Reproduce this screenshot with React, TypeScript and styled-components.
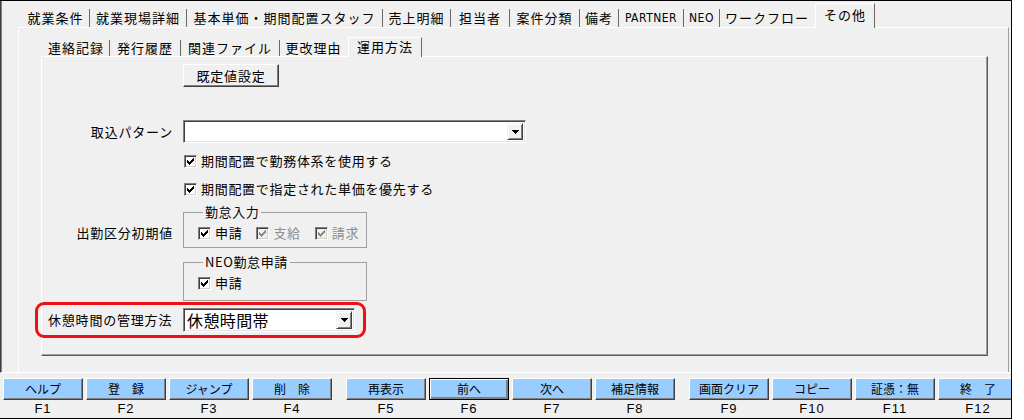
import React from 'react';
import styled, { createGlobalStyle, css } from 'styled-components';

const GlobalStyle = createGlobalStyle`
  html, body { margin: 0; padding: 0; background: #ffffff; }
  body {
    font-family: "Noto Sans CJK JP", "Noto Sans", sans-serif;
    font-size: 13px;
    color: #000;
  }
  svg { display: block; }
`;

const JP = `"Noto Sans CJK JP", "Noto Sans", sans-serif`;

const Window = styled.div`
  width: 1012px;
  height: 419px;
  box-sizing: border-box;
  border-top: 1px solid #000;
  border-right: 1px solid #000;
  border-bottom: 1px solid #000;
  background: #f0f0f0;
  display: flex;
  flex-direction: column;
  overflow: hidden;
`;

const TopArea = styled.div`
  height: 372px;
  flex: none;
  box-sizing: border-box;
  border-left: 1px solid #404040;
  box-shadow: inset 1px 0 0 #808080;
  border-bottom: 1px solid #ffffff;
  padding: 0 2px 0 17px;
  display: flex;
  flex-direction: column;
`;

const TabStrip = styled.div<{ $h: number; $ml: number }>`
  height: ${p => p.$h}px;
  flex: none;
  display: flex;
  align-items: flex-end;
  padding-left: ${p => p.$ml}px;
`;

const Tab = styled.div<{ $w: number; $h: number; $ah: number; $active?: boolean; $hideSep?: boolean; $narrow?: boolean }>`
  width: ${p => p.$w}px;
  height: ${p => (p.$active ? p.$ah : p.$h)}px;
  flex: none;
  box-sizing: border-box;
  display: flex;
  align-items: center;
  justify-content: center;
  white-space: nowrap;
  font-family: ${p => (p.$narrow ? `"DejaVu Sans Condensed", ${JP}` : JP)};
  font-size: ${p => (p.$narrow ? 12 : 13)}px;
  line-height: 14px;
  letter-spacing: ${p => (p.$narrow ? 0.5 : 1)}px;
  background: #f0f0f0;
  border-right: 1px solid ${p => (p.$hideSep ? 'transparent' : '#696969')};
  ${p =>
    p.$active &&
    css`
      border-top: 1px solid #ffffff;
      border-left: 1px solid #ffffff;
      margin-bottom: -1px;
      padding-bottom: 2px;
      position: relative;
      z-index: 1;
    `}
`;

const OuterPanel = styled.div`
  flex: 1;
  box-sizing: border-box;
  border-top: 1px solid #ffffff;
  border-left: 1px solid #ffffff;
  border-right: 1px solid #a0a0a0;
  padding: 7px 20px 0 22px;
  display: flex;
  flex-direction: column;
`;

const InnerPanel = styled.div`
  height: 300px;
  flex: none;
  box-sizing: border-box;
  border-top: 1px solid #ffffff;
  border-left: 1px solid #ffffff;
  border-right: 1px solid #5a5a5a;
  border-bottom: 1px solid #5a5a5a;
  box-shadow: inset -1px -1px 0 #a0a0a0;
  display: flex;
  flex-direction: column;
`;

const FormRow = styled.div<{ $mt: number }>`
  display: grid;
  grid-template-columns: 131px auto;
  column-gap: 10px;
  align-items: center;
  justify-items: start;
  margin-top: ${p => p.$mt}px;
`;

const FieldLabel = styled.div<{ $end?: boolean }>`
  justify-self: end;
  white-space: nowrap;
  font-size: 13px;
  line-height: 16px;
  letter-spacing: 0.8px;
  ${p =>
    p.$end &&
    css`
      align-self: end;
      padding-bottom: 7px;
    `}
`;

const PushButton = styled.div`
  width: 96px;
  height: 23px;
  box-sizing: border-box;
  display: flex;
  align-items: center;
  justify-content: center;
  background: #f0f0f0;
  border: 1px solid;
  border-color: #ffffff #404040 #404040 #ffffff;
  box-shadow: inset -1px -1px 0 #808080;
  font-size: 13px;
  letter-spacing: 0.8px;
  line-height: 14px;
`;

const Combo = styled.div<{ $w: number; $h: number }>`
  width: ${p => p.$w}px;
  height: ${p => p.$h}px;
  box-sizing: border-box;
  display: flex;
  align-items: stretch;
  background: #ffffff;
  border: 1px solid;
  border-color: #808080 #ffffff #ffffff #808080;
  box-shadow: inset 1px 1px 0 #404040, inset -1px -1px 0 #e3e3e3;
  padding: 2px;
`;

const ComboText = styled.div<{ $size: number }>`
  flex: 1;
  display: flex;
  align-items: center;
  padding-left: 1px;
  font-size: ${p => p.$size}px;
  line-height: ${p => p.$size + 2}px;
  letter-spacing: 0.4px;
  white-space: nowrap;
`;

const ComboArrow = styled.div`
  width: 16px;
  flex: none;
  box-sizing: border-box;
  display: flex;
  align-items: center;
  justify-content: center;
  background: #f0f0f0;
  border: 1px solid;
  border-color: #f0f0f0 #404040 #404040 #f0f0f0;
  box-shadow: inset 1px 1px 0 #ffffff, inset -1px -1px 0 #808080;
`;

const CheckRow = styled.div<{ $gap?: number }>`
  display: flex;
  align-items: center;
  gap: ${p => p.$gap ?? 0}px;
  height: 18px;
`;

const CheckItem = styled.div<{ $disabled?: boolean; $ml?: number }>`
  display: inline-flex;
  align-items: center;
  gap: 4px;
  margin-left: ${p => p.$ml ?? 0}px;
  color: ${p => (p.$disabled ? '#8d8d8d' : '#000')};
  font-size: 13px;
  line-height: 16px;
  letter-spacing: 0.7px;
  white-space: nowrap;
`;

const Box = styled.span<{ $disabled?: boolean }>`
  width: 13px;
  height: 13px;
  flex: none;
  box-sizing: border-box;
  display: inline-flex;
  align-items: center;
  justify-content: center;
  border: 1px solid;
  border-color: #808080 #ffffff #ffffff #808080;
  box-shadow: inset 1px 1px 0 #404040, inset -1px -1px 0 #d4d0c8;
  background: ${p => (p.$disabled ? '#f0f0f0' : '#ffffff')};
`;

const Group = styled.fieldset<{ $pb: number }>`
  display: block;
  width: 184px;
  box-sizing: border-box;
  margin: 0;
  min-width: 0;
  border: 1px solid #a0a0a0;
  padding: 5px 0 ${p => p.$pb}px 14px;
`;

const GroupLegend = styled.legend`
  margin-left: 5px;
  padding: 0 2px;
  font-size: 13px;
  line-height: 14px;
  letter-spacing: 0.6px;
`;

const Highlight = styled.div`
  margin-top: 1px;
  margin-left: -7px;
  width: 331px;
  height: 36px;
  box-sizing: border-box;
  border: 3px solid #ee1111;
  border-radius: 9px;
  padding-left: 10px;
  display: flex;
  align-items: center;
`;

const HighlightLabel = styled.div`
  width: 135px;
  flex: none;
  white-space: nowrap;
  font-size: 13px;
  line-height: 16px;
  letter-spacing: 0.8px;
`;

const BottomBar = styled.div`
  display: flex;
  gap: 14px;
  padding: 5px 0 0 3px;
`;

const KeyGroup = styled.div`
  display: flex;
  gap: 3px;
  flex: none;
`;

const FKey = styled.div`
  width: 80px;
  flex: none;
  display: flex;
  flex-direction: column;
  align-items: center;
`;

const FButton = styled.div<{ $focused?: boolean }>`
  width: 80px;
  height: 22px;
  box-sizing: border-box;
  display: flex;
  align-items: center;
  justify-content: center;
  background: #99ccff;
  font-size: 12px;
  line-height: 14px;
  white-space: pre;
  border: 1px solid;
  border-color: #ffffff #404040 #404040 #ffffff;
  box-shadow: inset -1px -1px 0 #808080;
  ${p =>
    p.$focused &&
    css`
      border-color: #000;
      box-shadow: inset 1px 1px 0 #ffffff, inset -2px -2px 0 #808080;
    `}
`;

const FLabel = styled.div`
  margin-top: 2px;
  font-family: "Liberation Sans", Arial, sans-serif;
  font-size: 13px;
  line-height: 14px;
  letter-spacing: 1px;
`;

const CHECK_PATTERN = [
  '......X',
  '.....XX',
  'X...XXX',
  'XX.XXX.',
  'XXXXX..',
  '.XXX...',
  '..X....',
];

const CheckMark: React.FC<{ color: string }> = ({ color }) => (
  <svg width="7" height="7" viewBox="0 0 7 7" shapeRendering="crispEdges">
    {CHECK_PATTERN.flatMap((row, y) =>
      row.split('').map((c, x) =>
        c === 'X' ? <rect key={`${x}-${y}`} x={x} y={y} width="1" height="1" fill={color} /> : null
      )
    )}
  </svg>
);

const Arrow: React.FC = () => (
  <svg width="7" height="4" viewBox="0 0 7 4" shapeRendering="crispEdges">
    <path d="M0 0h7v1h-1v1h-1v1h-1v1h-1v-1h-1v-1h-1v-1h-1z" fill="#000" />
  </svg>
);

const Check: React.FC<{ label: string; disabled?: boolean; ml?: number }> = ({ label, disabled, ml }) => (
  <CheckItem $disabled={disabled} $ml={ml}>
    <Box $disabled={disabled}>
      <CheckMark color={disabled ? '#8d8d8d' : '#000'} />
    </Box>
    {label}
  </CheckItem>
);

type TabDef = { label: string; w: number; active?: boolean; narrow?: boolean };

const outerTabs: TabDef[] = [
  { label: '就業条件', w: 68 },
  { label: '就業現場詳細', w: 97 },
  { label: '基本単価・期間配置スタッフ', w: 196 },
  { label: '売上明細', w: 68 },
  { label: '担当者', w: 59 },
  { label: '案件分類', w: 70 },
  { label: '備考', w: 39 },
  { label: 'PARTNER', w: 65, narrow: true },
  { label: 'NEO', w: 36, narrow: true },
  { label: 'ワークフロー', w: 95 },
  { label: 'その他', w: 60, active: true },
];

const innerTabs: TabDef[] = [
  { label: '連絡記録', w: 67 },
  { label: '発行履歴', w: 71 },
  { label: '関連ファイル', w: 99 },
  { label: '更改理由', w: 68 },
  { label: '運用方法', w: 74, active: true },
];

const keyGroups = [
  [
    { t: 'ヘルプ', k: 'F1' },
    { t: '登　録', k: 'F2' },
    { t: 'ジャンプ', k: 'F3' },
    { t: '削　除', k: 'F4' },
  ],
  [
    { t: '再表示', k: 'F5' },
    { t: '前へ', k: 'F6', focused: true },
    { t: '次へ', k: 'F7' },
    { t: '補足情報', k: 'F8' },
  ],
  [
    { t: '画面クリア', k: 'F9' },
    { t: 'コピー', k: 'F10' },
    { t: '証憑：無', k: 'F11' },
    { t: '終　了', k: 'F12' },
  ],
];

const Tabs: React.FC<{ tabs: TabDef[]; h: number; ah: number; stripH: number; ml: number }> = ({
  tabs,
  h,
  ah,
  stripH,
  ml,
}) => (
  <TabStrip $h={stripH} $ml={ml}>
    {tabs.map((t, i) => (
      <Tab
        key={t.label}
        $w={t.w}
        $h={h}
        $ah={ah}
        $active={t.active}
        $narrow={t.narrow}
        $hideSep={!!tabs[i + 1]?.active}
      >
        {t.label}
      </Tab>
    ))}
  </TabStrip>
);

export default function App() {
  return (
    <>
      <GlobalStyle />
      <Window>
        <TopArea>
          <Tabs tabs={outerTabs} h={18} ah={25} stripH={26} ml={4} />
          <OuterPanel>
            <Tabs tabs={innerTabs} h={16} ah={20} stripH={21} ml={2} />
            <InnerPanel>
              <FormRow $mt={7}>
                <span />
                <PushButton>既定値設定</PushButton>
              </FormRow>
              <FormRow $mt={33}>
                <FieldLabel>取込パターン</FieldLabel>
                <Combo $w={343} $h={23}>
                  <ComboText $size={13} />
                  <ComboArrow>
                    <Arrow />
                  </ComboArrow>
                </Combo>
              </FormRow>
              <FormRow $mt={9}>
                <span />
                <CheckRow>
                  <Check label="期間配置で勤務体系を使用する" ml={1} />
                </CheckRow>
              </FormRow>
              <FormRow $mt={10}>
                <span />
                <CheckRow>
                  <Check label="期間配置で指定された単価を優先する" ml={1} />
                </CheckRow>
              </FormRow>
              <FormRow $mt={7}>
                <FieldLabel $end>出勤区分初期値</FieldLabel>
                <Group $pb={5}>
                  <GroupLegend>勤怠入力</GroupLegend>
                  <CheckRow $gap={14}>
                    <Check label="申請" />
                    <Check label="支給" disabled />
                    <Check label="請求" disabled />
                  </CheckRow>
                </Group>
              </FormRow>
              <FormRow $mt={7}>
                <span />
                <Group $pb={8}>
                  <GroupLegend>NEO勤怠申請</GroupLegend>
                  <CheckRow>
                    <Check label="申請" />
                  </CheckRow>
                </Group>
              </FormRow>
              <Highlight>
                <HighlightLabel>休憩時間の管理方法</HighlightLabel>
                <Combo $w={172} $h={24}>
                  <ComboText $size={16}>休憩時間帯</ComboText>
                  <ComboArrow>
                    <Arrow />
                  </ComboArrow>
                </Combo>
              </Highlight>
            </InnerPanel>
          </OuterPanel>
        </TopArea>
        <BottomBar>
          {keyGroups.map((g, gi) => (
            <KeyGroup key={gi}>
              {g.map(b => (
                <FKey key={b.k}>
                  <FButton $focused={b.focused}>{b.t}</FButton>
                  <FLabel>{b.k}</FLabel>
                </FKey>
              ))}
            </KeyGroup>
          ))}
        </BottomBar>
      </Window>
    </>
  );
}
